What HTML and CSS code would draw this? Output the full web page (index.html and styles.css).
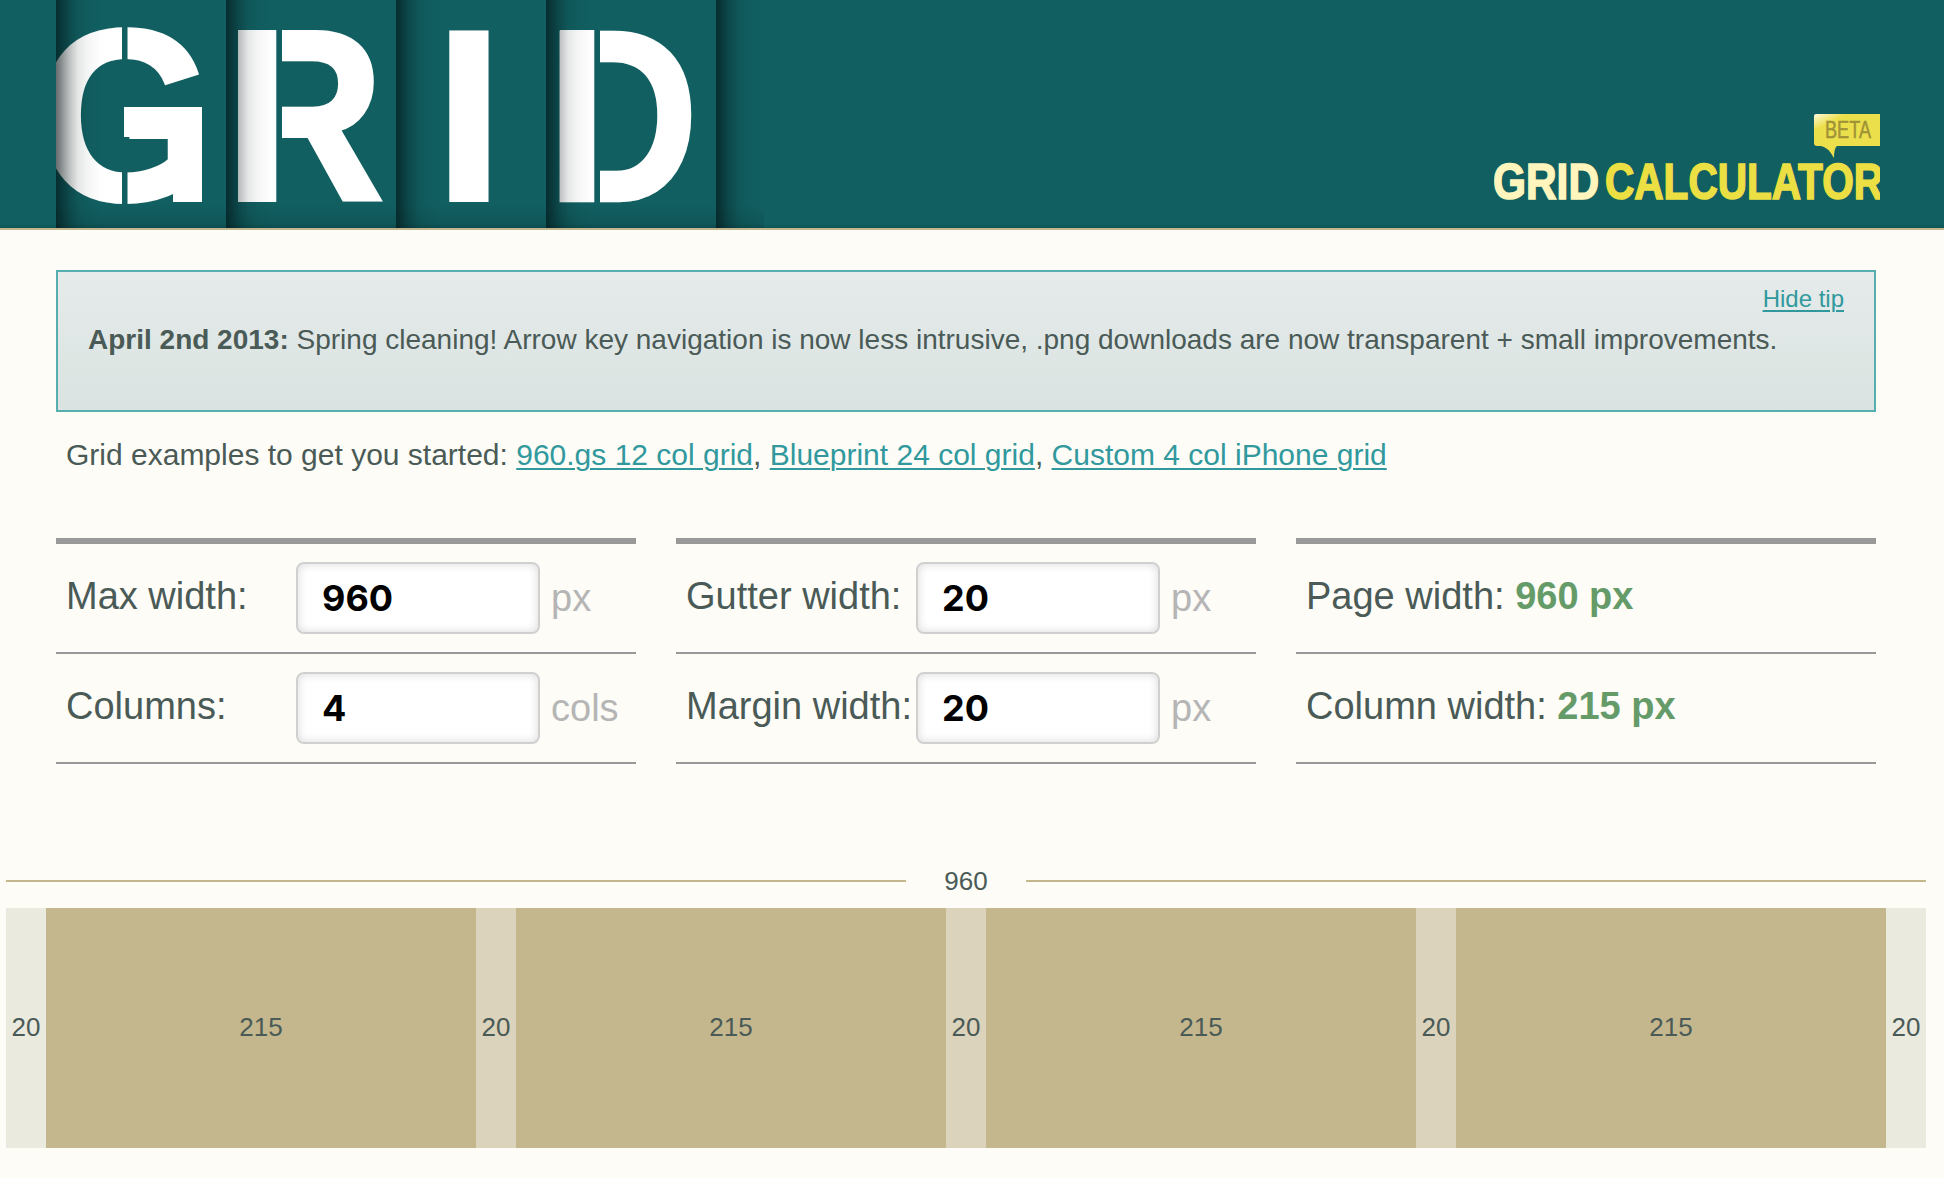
FILE: index.html
```html
<!DOCTYPE html>
<html lang="en">
<head>
<meta charset="utf-8">
<title>Grid Calculator</title>
<link rel="stylesheet" href="styles.css">
</head>
<body>
<header class="header">
  <div class="panels">
    <div class="panel">
      <svg class="letter letter-clipped" width="170" height="228" viewBox="56 0 170 228">
        <text class="glyph" transform="translate(36.5 200) scale(.935 1)">G</text>
        <rect class="stem" x="124" y="107" width="78" height="30"/>
        <rect class="stem" x="173" y="136" width="29" height="66"/>
        <rect class="cut" x="122" y="20" width="5.5" height="44"/>
        <rect class="cut" x="122" y="168" width="5.5" height="44"/>
      </svg>
    </div>
    <div class="panel">
      <svg class="letter" width="170" height="228" viewBox="226 0 170 228">
        <text class="glyph" transform="translate(225.3 200) scale(.9 1)">R</text>
        <rect class="stem" x="238" y="30" width="39" height="172"/>
        <rect class="cut" x="276.3" y="20" width="5.7" height="190"/>
      </svg>
    </div>
    <div class="panel panel-narrow">
      <svg class="letter" width="150" height="228" viewBox="396 0 150 228">
        <text class="glyph" transform="translate(435 200)">I</text>
      </svg>
    </div>
    <div class="panel">
      <svg class="letter" width="170" height="228" viewBox="546 0 170 228">
        <text class="glyph" transform="translate(547.6 200) scale(.855 1)">D</text>
        <rect class="stem" x="560" y="30" width="35" height="172"/>
        <rect class="cut" x="594.3" y="20" width="5.7" height="190"/>
      </svg>
    </div>
    <div class="panel panel-end"></div>
  </div>
  <svg class="brand" width="386" height="86" viewBox="1494 114 386 86">
    <defs>
      <linearGradient id="shine" x1="0" y1="0" x2=".3" y2=".4">
        <stop offset="0" stop-color="#fffbe0"/>
        <stop offset=".6" stop-color="#ecdf4c"/>
      </linearGradient>
    </defs>
    <path fill="url(#shine)" d="M1816 114H1880V146H1837Q1834 148 1834 158Q1828 147 1821 146H1817Q1814 146 1814 143V116Q1814 114 1816 114Z"/>
    <text class="beta" x="1825" y="138" textLength="46" lengthAdjust="spacingAndGlyphs">BETA</text>
    <text class="brand-grid" x="1493" y="199" textLength="106" lengthAdjust="spacingAndGlyphs">GRID</text>
    <text class="brand-calc" x="1605" y="199" textLength="278" lengthAdjust="spacingAndGlyphs">CALCULATOR</text>
  </svg>
</header>

<main class="main">
  <section class="tip">
    <a class="hide" href="#">Hide tip</a>
    <p class="tip-text"><strong>April 2nd 2013:</strong> Spring cleaning! Arrow key navigation is now less intrusive, .png downloads are now transparent + small improvements.</p>
  </section>
  <p class="examples">Grid examples to get you started: <a href="#">960.gs 12 col grid</a>, <a href="#">Blueprint 24 col grid</a>, <a href="#">Custom 4 col iPhone grid</a></p>

  <form class="settings">
    <div class="group">
      <div class="row"><label class="label" for="max">Max width:</label><input class="field" id="max" value="960"><span class="unit">px</span></div>
      <div class="row"><label class="label" for="cols">Columns:</label><input class="field" id="cols" value="4"><span class="unit">cols</span></div>
    </div>
    <div class="group">
      <div class="row"><label class="label" for="gutter">Gutter width:</label><input class="field" id="gutter" value="20"><span class="unit">px</span></div>
      <div class="row"><label class="label" for="margin">Margin width:</label><input class="field" id="margin" value="20"><span class="unit">px</span></div>
    </div>
    <div class="group">
      <div class="row"><span class="result">Page width: <strong>960 px</strong></span></div>
      <div class="row"><span class="result">Column width: <strong>215 px</strong></span></div>
    </div>
  </form>
</main>

<section class="preview">
  <div class="ruler"><span class="total">960</span></div>
  <div class="grid">
    <div class="margin">20</div>
    <div class="col">215</div>
    <div class="gutter">20</div>
    <div class="col">215</div>
    <div class="gutter">20</div>
    <div class="col">215</div>
    <div class="gutter">20</div>
    <div class="col">215</div>
    <div class="margin">20</div>
  </div>
</section>
</body>
</html>
```
FILE: styles.css
```css
* { box-sizing: border-box; }

body {
  margin: 0;
  background: #fdfcf7;
  color: #4a5a56;
  font-family: "Liberation Sans", Arial, sans-serif;
}

p { margin: 0; }
a { color: #31999d; text-underline-offset: 3px; text-decoration-thickness: 2px; }

.header {
  display: flex;
  justify-content: space-between;
  align-items: flex-end;
  height: 230px;
  padding: 0 64px 0 56px;
  background: linear-gradient(#115f61 224px, #0f5557 228px);
  border-bottom: 2px solid #c4b78e;
}

.panels { display: flex; height: 228px; }
.panel {
  position: relative;
  width: 170px;
  height: 228px;
}
.panel-narrow { width: 150px; }
.panel-end { width: 48px; }
/* Fold shadow, cast over both the panel and its letter */
.panel::after {
  content: "";
  position: absolute;
  inset: 0;
  background:
    linear-gradient(90deg, rgba(0,12,14,.6), rgba(0,12,14,.5) 4px, rgba(0,12,14,.27) 13px, rgba(0,12,14,.1) 22px, rgba(0,12,14,.04) 32px, transparent 46px),
    linear-gradient(transparent 204px, rgba(0,12,14,.12));
}
.letter { display: block; overflow: visible; }
.letter-clipped { overflow: hidden; }
.glyph {
  font-family: "Liberation Sans", Arial, sans-serif;
  font-weight: bold;
  font-size: 244px;
  fill: #fff;
  stroke: #fff;
  stroke-width: 4px;
  vector-effect: non-scaling-stroke;
}
.stem { fill: #fff; }
.cut { fill: #115f61; }

.brand { display: block; margin-bottom: 28px; }
.brand text { font-family: "Liberation Sans", Arial, sans-serif; }
.brand .brand-grid, .brand .brand-calc { font-size: 50px; font-weight: bold; stroke-width: 1.6px; }
.brand .brand-grid { fill: #fff5bd; stroke: #fff5bd; }
.brand .brand-calc { fill: #ecdf43; stroke: #ecdf43; }
.brand .beta { font-size: 23px; fill: #a09337; stroke: #a09337; stroke-width: .5px; }

.main { width: 1820px; margin: 40px 0 0 56px; }

.tip {
  display: flex;
  flex-direction: column;
  height: 142px;
  padding: 12px 30px 0;
  border: 2px solid #56aeae;
  background: linear-gradient(#e5ebea, #dae3e1);
}
.hide { align-self: flex-end; font-size: 24px; line-height: 30px; }
.tip-text { margin-top: 8px; font-size: 28px; line-height: 36px; white-space: nowrap; }

.examples { margin-top: 25px; padding-left: 10px; font-size: 30px; line-height: 36px; }

.settings {
  display: grid;
  grid-template-columns: repeat(3, 580px);
  gap: 40px;
  margin-top: 65px;
}
.group { border-top: 6px solid #999; }
.row {
  display: flex;
  align-items: flex-start;
  height: 110px;
  padding: 18px 0 0 10px;
  border-bottom: 2px solid #999;
  font-size: 38px;
  line-height: 68px;
  white-space: nowrap;
}
.label { width: 230px; }
.field {
  width: 244px;
  height: 72px;
  padding: 0 24px;
  border: 2px solid #d0d0d0;
  border-radius: 8px;
  background: #fff;
  box-shadow: inset 0 0 10px rgba(0,0,0,.15);
  color: #000;
  font: bold 36px Inter, sans-serif;
}
.unit { margin-left: 11px; line-height: 73px; color: #b5b5b5; }
.result strong { color: #659b69; }

.preview { width: 1920px; margin: 102px 0 0 6px; font-size: 26px; }
.ruler { display: flex; align-items: center; height: 30px; }
.ruler::before, .ruler::after { content: ""; flex: 1; height: 2px; background: #c4b78e; }
.total { width: 120px; text-align: center; }
.grid { display: flex; height: 240px; margin-top: 12px; line-height: 238px; text-align: center; }
.margin { width: 40px; background: #ebeade; }
.col { width: 430px; background: #c4b78e; }
.gutter { width: 40px; background: #dbd3bb; }
```
